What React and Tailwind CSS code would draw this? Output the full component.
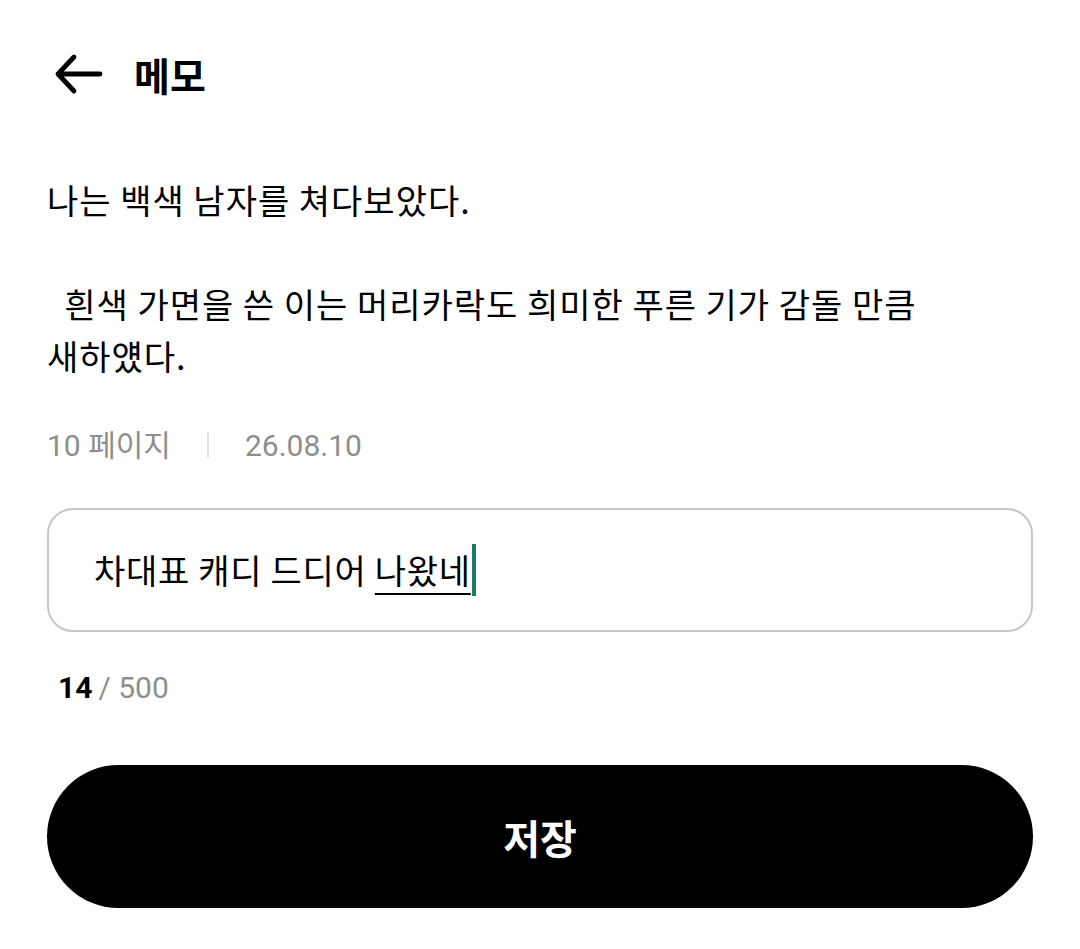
import React from 'react';

const font = { fontFamily: '"Noto Sans CJK KR", "Noto Sans", sans-serif' };
const latinFont = { fontFamily: 'Roboto, "Noto Sans CJK KR", sans-serif' };

// Back arrow, drawn to match the thick rounded stroke in the header
const BackArrow = () => (
  <svg width="52" height="44" viewBox="0 0 52 44" fill="none" aria-hidden="true">
    <path
      d="M48 22H6M22 5L6 22l16 17"
      stroke="#000"
      strokeWidth="4.8"
      strokeLinecap="round"
      strokeLinejoin="round"
    />
  </svg>
);

const MemoEditor = () => {
  const memo = '차대표 캐디 드디어 ';
  const composing = '나왔네';

  return (
    <div className="w-[1080px] h-[949px] bg-white px-[47px] text-black" style={font}>
      {/* Header */}
      <header className="h-[148px] flex items-center">
        <button className="ml-[5px] flex items-center" aria-label="뒤로">
          <BackArrow />
        </button>
        <h1 className="ml-[30px] text-[39px] font-bold leading-none">메모</h1>
      </header>

      {/* Highlighted passage */}
      <p className="mt-[26px] text-[34px] leading-[52px] tracking-[1px] whitespace-pre-wrap break-keep">
        {'나는 백색 남자를 쳐다보았다.\n\n  흰색 가면을 쓴 이는 머리카락도 희미한 푸른 기가 감돌 만큼 새하얬다.'}
      </p>

      {/* Page / date */}
      <div className="mt-[43px] h-[40px] flex items-center text-[30px] text-[#8e8e8e]" style={latinFont}>
        <span>10 페이지</span>
        <span className="mx-[36px] w-[2px] h-[26px] bg-[#e2e2e2]" />
        <span>26.08.10</span>
      </div>

      {/* Memo input */}
      <div className="mt-[43px] h-[124px] border-[2.5px] border-[#c6c6c6] rounded-[26px] flex items-center pl-[45px]">
        <span className="text-[34px] leading-none tracking-[0.7px] whitespace-pre">{memo}</span>
        <span className="text-[34px] leading-none tracking-[0.7px] underline underline-offset-[9px] decoration-[2px]">{composing}</span>
        <span className="ml-[1px] w-[4px] h-[52px] bg-[#1b7a6c]" />
      </div>

      {/* Character counter */}
      <div className="mt-[35px] h-[40px] flex items-center pl-[11px] text-[30px]" style={latinFont}>
        <span className="font-bold">14</span>
        <span className="ml-[6px] text-[#8e8e8e]">/ 500</span>
      </div>

      {/* Save */}
      <button className="mt-[58px] w-full h-[143px] rounded-full bg-black text-white text-[40px] font-bold">
        저장
      </button>
    </div>
  );
};

export default function App() {
  return <MemoEditor />;
}
